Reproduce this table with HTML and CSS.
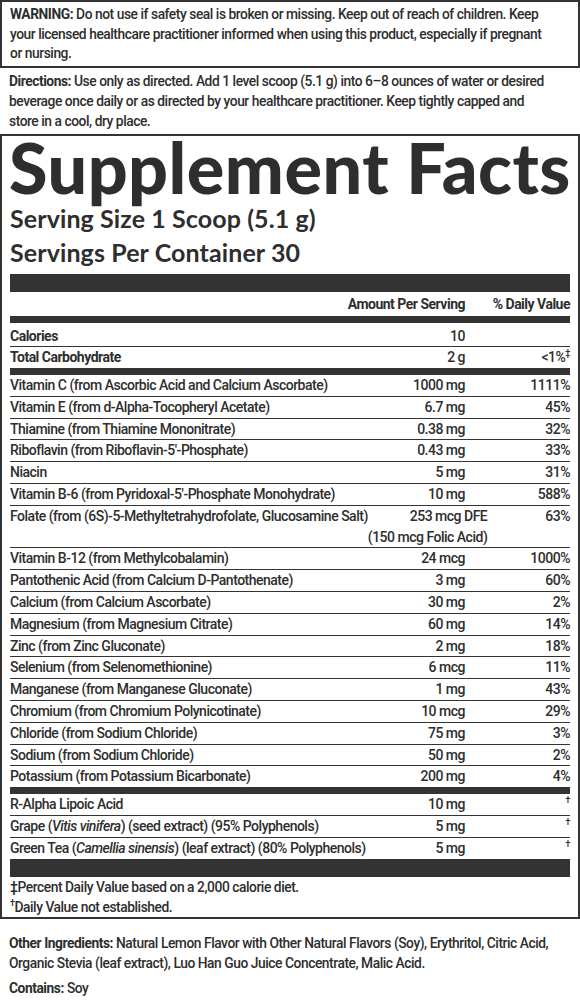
FILE: index.html
```html
<!DOCTYPE html>
<html lang="en">
<head>
    <meta charset="UTF-8">
    <meta name="viewport" content="width=device-width, initial-scale=1.0">
    <title>Supplement Facts</title>
    <link rel="stylesheet" href="styles.css">
</head>
<body>
    <div class="warning">
        <strong>WARNING:</strong> Do not use if safety seal is broken or missing. Keep out of reach of children. Keep<br>
        your licensed healthcare practitioner informed when using this product, especially if pregnant<br>
        or nursing.
    </div>

    <p class="directions"><strong>Directions:</strong> Use only as directed. Add 1 level scoop (5.1 g) into 6–8 ounces of water or desired<br>
        beverage once daily or as directed by your healthcare practitioner. Keep tightly capped and<br>
        store in a cool, dry place.</p>

    <div class="facts">
        <h1>Supplement Facts</h1>
        <div class="serving">Serving Size 1 Scoop (5.1 g)</div>
        <div class="serving">Servings Per Container 30</div>
        <div class="bar big"></div>

        <div class="row head">
            <span class="name"></span>
            <span class="amt">Amount Per Serving</span>
            <span class="dv">% Daily Value</span>
        </div>
        <div class="bar"></div>

        <div class="row strong first">
            <span class="name">Calories</span>
            <span class="amt">10</span>
            <span class="dv"></span>
        </div>
        <div class="row strong last">
            <span class="name">Total Carbohydrate</span>
            <span class="amt">2 g</span>
            <span class="dv">&lt;1%<sup>‡</sup></span>
        </div>
        <div class="bar mid"></div>

        <div class="row"><span class="name">Vitamin C (from Ascorbic Acid and Calcium Ascorbate)</span><span class="amt">1000 mg</span><span class="dv">1111%</span></div>
        <div class="row"><span class="name">Vitamin E (from d-Alpha-Tocopheryl Acetate)</span><span class="amt">6.7 mg</span><span class="dv">45%</span></div>
        <div class="row"><span class="name">Thiamine (from Thiamine Mononitrate)</span><span class="amt">0.38 mg</span><span class="dv">32%</span></div>
        <div class="row"><span class="name">Riboflavin (from Riboflavin-5'-Phosphate)</span><span class="amt">0.43 mg</span><span class="dv">33%</span></div>
        <div class="row"><span class="name">Niacin</span><span class="amt">5 mg</span><span class="dv">31%</span></div>
        <div class="row"><span class="name">Vitamin B-6 (from Pyridoxal-5'-Phosphate Monohydrate)</span><span class="amt">10 mg</span><span class="dv">588%</span></div>
        <div class="row"><span class="name">Folate (from (6S)-5-Methyltetrahydrofolate, Glucosamine Salt)</span><span class="amt">253 mcg DFE<br>(150 mcg Folic Acid)</span><span class="dv">63%</span></div>
        <div class="row"><span class="name">Vitamin B-12 (from Methylcobalamin)</span><span class="amt">24 mcg</span><span class="dv">1000%</span></div>
        <div class="row"><span class="name">Pantothenic Acid (from Calcium D-Pantothenate)</span><span class="amt">3 mg</span><span class="dv">60%</span></div>
        <div class="row"><span class="name">Calcium (from Calcium Ascorbate)</span><span class="amt">30 mg</span><span class="dv">2%</span></div>
        <div class="row"><span class="name">Magnesium (from Magnesium Citrate)</span><span class="amt">60 mg</span><span class="dv">14%</span></div>
        <div class="row"><span class="name">Zinc (from Zinc Gluconate)</span><span class="amt">2 mg</span><span class="dv">18%</span></div>
        <div class="row"><span class="name">Selenium (from Selenomethionine)</span><span class="amt">6 mcg</span><span class="dv">11%</span></div>
        <div class="row"><span class="name">Manganese (from Manganese Gluconate)</span><span class="amt">1 mg</span><span class="dv">43%</span></div>
        <div class="row"><span class="name">Chromium (from Chromium Polynicotinate)</span><span class="amt">10 mcg</span><span class="dv">29%</span></div>
        <div class="row"><span class="name">Chloride (from Sodium Chloride)</span><span class="amt">75 mg</span><span class="dv">3%</span></div>
        <div class="row"><span class="name">Sodium (from Sodium Chloride)</span><span class="amt">50 mg</span><span class="dv">2%</span></div>
        <div class="row last"><span class="name">Potassium (from Potassium Bicarbonate)</span><span class="amt">200 mg</span><span class="dv">4%</span></div>
        <div class="bar"></div>

        <div class="row"><span class="name">R-Alpha Lipoic Acid</span><span class="amt">10 mg</span><span class="dv"><sup>†</sup></span></div>
        <div class="row"><span class="name">Grape (<em>Vitis vinifera</em>) (seed extract) (95% Polyphenols)</span><span class="amt">5 mg</span><span class="dv"><sup>†</sup></span></div>
        <div class="row last"><span class="name">Green Tea (<em>Camellia sinensis</em>) (leaf extract) (80% Polyphenols)</span><span class="amt">5 mg</span><span class="dv"><sup>†</sup></span></div>
        <div class="bar big"></div>

        <p class="note">‡Percent Daily Value based on a 2,000 calorie diet.</p>
        <p class="note"><sup>†</sup>Daily Value not established.</p>
    </div>

    <p class="other"><strong>Other Ingredients:</strong> Natural Lemon Flavor with Other Natural Flavors (Soy), Erythritol, Citric Acid,<br>
        Organic Stevia (leaf extract), Luo Han Guo Juice Concentrate, Malic Acid.</p>
    <p class="other contains"><strong>Contains:</strong> Soy</p>
</body>
</html>
```

FILE: styles.css
```css
body {
    font-family: Roboto, "Liberation Sans", sans-serif;
    font-size: 13.8px;
    font-weight: 500;
    letter-spacing: -0.45px;
    color: #2e2e2e;
    background: #fff;
    margin: 0;
    padding: 0;
}
strong {
    font-weight: 700;
}
.warning {
    border: 2px solid #333;
    padding: 3px 8px 2px 8px;
    line-height: 19.5px;
}
.directions {
    margin: 0;
    padding: 3px 9px 3px 9px;
    line-height: 20px;
}
.facts {
    border: 2px solid #333;
    padding: 0 8px 0 8px;
}
.facts h1 {
    font-family: Lato, "Open Sans", sans-serif;
    font-weight: 900;
    font-size: 70px;
    line-height: 62px;
    letter-spacing: 0.5px;
    white-space: nowrap;
    margin: 0 0 0 -1px;
}
.serving {
    font-family: Lato, "Open Sans", sans-serif;
    font-weight: 700;
    font-size: 25px;
    line-height: 34px;
    letter-spacing: 0.1px;
}
.serving:first-of-type {
    margin-top: 3px;
}
.bar {
    background: #333;
    height: 7px;
}
.bar.big {
    height: 18px;
    margin-top: 5px;
}
.bar.big:last-of-type {
    margin-top: 0;
}
.row {
    display: flex;
    font-size: 14px;
    letter-spacing: -0.5px;
    line-height: 20.8px;
    border-bottom: 1px solid #333;
}
.row.last {
    border-bottom: none;
}
.row.head {
    font-weight: 700;
    line-height: 24px;
    border-bottom: none;
}
.row.strong .name {
    font-weight: 700;
}
.row.first {
    padding-top: 3px;
}
.name {
    flex: 1;
    white-space: nowrap;
}
.amt {
    text-align: right;
    white-space: nowrap;
}
.dv {
    width: 105px;
    text-align: right;
}
sup {
    font-size: 9px;
    line-height: 0;
}
.note {
    margin: 0;
    line-height: 20px;
}
.other {
    margin: 0;
    padding: 14px 9px 0 9px;
    line-height: 20px;
}
.other.contains {
    padding-top: 5px;
}
```
